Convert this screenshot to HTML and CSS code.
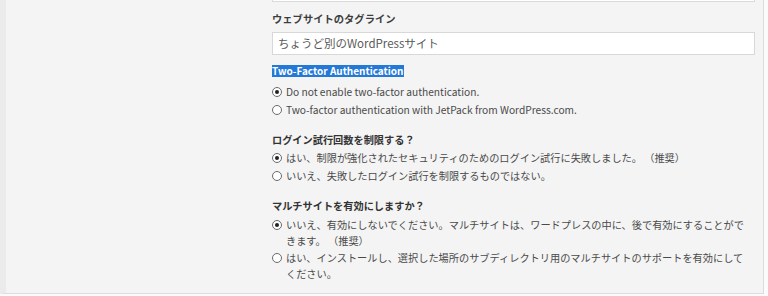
FILE: index.html
```html
<!DOCTYPE html>
<html lang="ja">
<head>
<meta charset="utf-8">
<link rel="stylesheet" href="styles.css">
</head>
<body>
<div class="panel">
  <div class="col">
    <div class="prev-input"></div>
    <div class="label">ウェブサイトのタグライン</div>
    <div class="input">ちょうど別のWordPressサイト</div>

    <div class="sel-heading"><span class="selected">Two-Factor Authentication</span></div>
    <div class="group g-tight">
      <div class="opt"><span class="radio on"></span><span class="txt">Do not enable two-factor authentication.</span></div>
      <div class="opt"><span class="radio"></span><span class="txt">Two-factor authentication with JetPack from WordPress.com.</span></div>
    </div>

    <div class="heading">ログイン試行回数を制限する？</div>
    <div class="group">
      <div class="opt"><span class="radio on"></span><span class="txt">はい、制限が強化されたセキュリティのためのログイン試行に失敗しました。 （推奨）</span></div>
      <div class="opt"><span class="radio"></span><span class="txt">いいえ、失敗したログイン試行を制限するものではない。</span></div>
    </div>

    <div class="heading">マルチサイトを有効にしますか？</div>
    <div class="group g-wrap">
      <div class="opt"><span class="radio on"></span><span class="txt">いいえ、有効にしないでください。マルチサイトは、ワードプレスの中に、後で有効にすることができます。 （推奨）</span></div>
      <div class="opt"><span class="radio"></span><span class="txt">はい、インストールし、選択した場所のサブディレクトリ用のマルチサイトのサポートを有効にしてください。</span></div>
    </div>
  </div>
</div>
</body>
</html>
```
FILE: styles.css
```css
html, body {
  margin: 0;
  padding: 0;
  background: #fbfbfb;
}
body {
  width: 768px;
  height: 296px;
  overflow: hidden;
  font-family: "Noto Sans CJK JP", "Open Sans", sans-serif;
  font-size: 10.2px;
  color: #4a4a4a;
}
.panel {
  box-sizing: border-box;
  width: 764px;
  height: 294px;
  background: #f4f4f4;
  border-left: 6px solid #ebebeb;
  border-right: 1px solid #dcdcdc;
  border-bottom: 1px solid #dcdcdc;
  padding-left: 266px;
}
.col {
  width: 483px;
}
.prev-input {
  height: 1px;
  background: #fff;
  border: 1px solid #dadada;
  border-top: none;
}
.label {
  margin-top: 9px;
  line-height: 16px;
  font-size: 10.3px;
  font-weight: 700;
  color: #3d3d3d;
}
.input {
  box-sizing: border-box;
  margin-top: 5px;
  height: 23px;
  background: #fff;
  border: 1px solid #d8d8d8;
  padding-left: 5px;
  font-size: 11.5px;
  line-height: 21px;
  color: #5a5a5a;
}
.sel-heading {
  margin-top: 10px;
  height: 12px;
  line-height: 12px;
}
.selected {
  display: inline-block;
  line-height: 12px;
  height: 12px;
  background: #2479d6;
  color: #fff;
  font-weight: 700;
  font-size: 10px;
}
.group {
  margin-top: 2px;
}
.g-tight {
  margin-top: 7px;
}
.g-wrap {
  margin-top: 3px;
}
.heading {
  margin-top: 14px;
  line-height: 16px;
  font-weight: 700;
  color: #333;
}
.opt {
  display: flex;
  align-items: flex-start;
  line-height: 16px;
  margin-bottom: 2px;
  padding-right: 4px;
}
.g-wrap .opt {
  line-height: 15.5px;
}
.radio {
  flex: none;
  box-sizing: border-box;
  width: 10px;
  height: 10px;
  margin: 3px 4px 0 0;
  border: 1px solid #6a6a6a;
  border-radius: 50%;
  background: #fff;
  position: relative;
}
.radio.on::after {
  content: "";
  position: absolute;
  left: 2px;
  top: 2px;
  width: 4px;
  height: 4px;
  border-radius: 50%;
  background: #222;
}
.txt {
  flex: 1;
}
```
